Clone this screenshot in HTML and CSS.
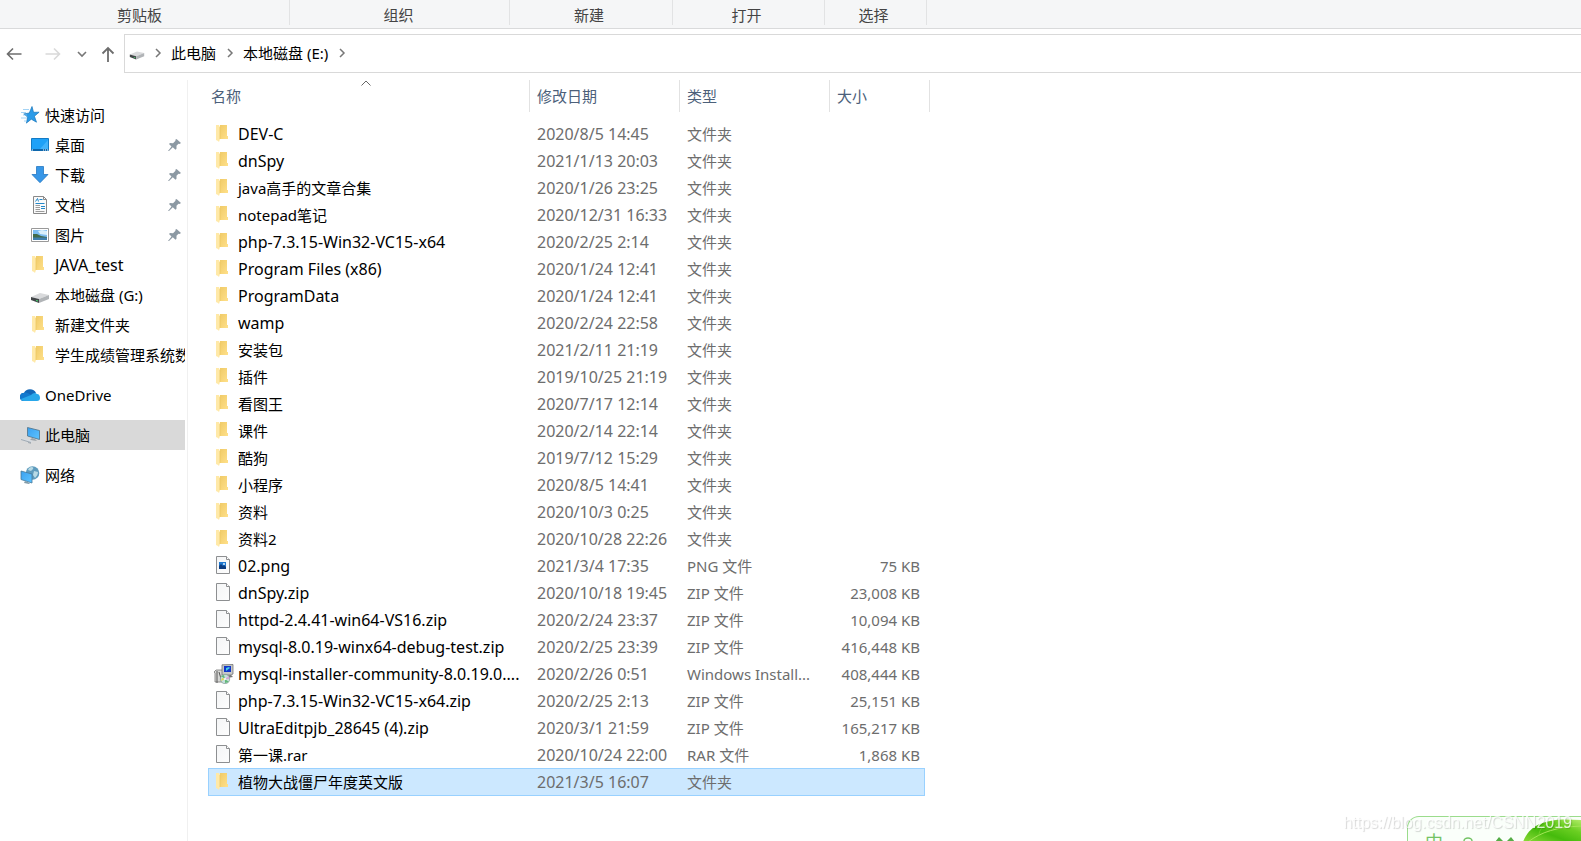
FILE: index.html
```html
<!DOCTYPE html>
<html lang="zh-CN">
<head>
<meta charset="utf-8">
<title>本地磁盘 (E:)</title>
<link rel="stylesheet" href="styles.css">
</head>
<body>
<svg class="defs" aria-hidden="true">
  <defs>
    <linearGradient id="gold" x1="0" y1="0" x2="1" y2="1"><stop offset="0" stop-color="#f0cb68"/><stop offset="1" stop-color="#ffe08a"/></linearGradient>
    <linearGradient id="sky" x1="0" y1="0" x2="1" y2="1"><stop offset="0" stop-color="#3aa0f0"/><stop offset="1" stop-color="#5ec4ff"/></linearGradient>
    <linearGradient id="paper" x1="0" y1="0" x2="1" y2="1"><stop offset="0" stop-color="#f4f5f6"/><stop offset="1" stop-color="#fdfdfd"/></linearGradient>
    <linearGradient id="leaf" x1="0" y1="1" x2="1" y2="0"><stop offset="0" stop-color="#8fdc3a"/><stop offset="0.4" stop-color="#45bb0c"/><stop offset="0.7" stop-color="#6bcf22"/><stop offset="1" stop-color="#b4ec6a"/></linearGradient>
  </defs>
  <symbol id="folder" viewBox="0 0 20 20"><path d="M6 1h7v11h1v3H6z" fill="url(#gold)"/><path d="M2 1h3l1 2v12l-1 3-1-1-2-1z" fill="#ffe9a8"/><path d="M6 3v12" stroke="#edc862" stroke-width=".8"/></symbol>
  <symbol id="file" viewBox="0 0 20 20"><path d="M2.500.500h10l3 3v14h-13z" fill="url(#paper)" stroke="#8d8f91"/><path d="M12.500.500v3h3" fill="#fff" stroke="#8d8f91"/></symbol>
  <symbol id="image-file" viewBox="0 0 20 20"><use href="#file"/><path d="M5 6h7v7H5z" fill="#1e78d0"/><path d="M5 10l2-2 2 2 1-1 2 2v2H5z" fill="#0c3c80"/><circle cx="10" cy="8" r="1" fill="#dff3ff"/></symbol>
  <symbol id="installer" viewBox="0 0 20 20"><path d="M0 8l2-2h7v12H1V9z" fill="#d7d8d6" stroke="#777" stroke-width=".8"/><path d="M3 7v12M5 8l3 10" stroke="#555"/><path d="M8 .8l11-.3v9.500l-2 1H8z" fill="#c6c8c7" stroke="#666" stroke-width=".7"/><path d="M10 2h7v6h-7z" fill="#1237c9"/><path d="M12 4l3-1 1 1-4 3z" fill="#46cde6"/><path d="M9 12l8-1 2 2-6 1z" fill="#777"/><circle cx="11" cy="15" r="4.700" fill="#c7dedb" stroke="#819895" stroke-width=".7"/><path d="M11 15L7 12l3-1zM11 15l4 3-4 1z" fill="#62b979"/><path d="M11 15l4-3v3z" fill="#d4a6d8"/><path d="M11 15l-4 2 1-3z" fill="#e6d34c"/><circle cx="11" cy="15" r="1" fill="#fff"/></symbol>
  <symbol id="star" viewBox="0 0 20 20"><path d="M12 1.500l1.500 5.800 5.600-.1-4.700 4 2.100 6-5.200-3-4.900 3.900 1.300-6-3.900-3.200 5.500-.9z" fill="#2b9be8" stroke="#1775bc" stroke-width=".7"/><path d="M3 4.500h6M1 7.500h5M3 10h4M1 13h6M4 16h3" stroke="#8bc8f3" stroke-width=".8"/></symbol>
  <symbol id="desktop" viewBox="0 0 20 20"><path d="M1.500 3.500h17v12h-17z" fill="#1fa1f7" stroke="#147bc5"/><path d="M10 14L18 5v9z" fill="#42b3fb"/><path d="M2 14h16v2H2z" fill="#0e67ac"/><path d="M2 15h1M13 15h1M15 15h1M17 15h1" stroke="#fff"/></symbol>
  <symbol id="download" viewBox="0 0 20 20"><path d="M6.500 1.500h7v8h4.500L10 17.700 2 9.500h4.500z" fill="#3797e8" stroke="#2677c2" stroke-width=".8"/></symbol>
  <symbol id="document" viewBox="0 0 20 20"><path d="M3.500 1.500h10l3 3v14h-13z" fill="#fafafa" stroke="#898989"/><path d="M13.500 1.500v3h3" fill="none" stroke="#898989"/><path d="M5.500 6.500l2-3 1 3M9.500 4.500h3M5.500 8.500h9M11 11.500h4M11 13.500h4" stroke="#2488c9" fill="none"/><path d="M5.500 10.500H10M5.500 12.500H10M5.500 14.500H10M5.500 16.500h9" stroke="#9b9b9b"/></symbol>
  <symbol id="picture" viewBox="0 0 20 20"><path d="M1.500 3.500h17v13h-17z" fill="#fff" stroke="#999"/><path d="M3 5h14v10H3z" fill="#7dbdf2"/><path d="M8 6l4-1 5 1v4l-7-1z" fill="#d9effb"/><path d="M3 9l4 0 4 2 6 1v2H3z" fill="#426b4b"/><path d="M3 12.500h14V15H3z" fill="#3f7fae"/></symbol>
  <symbol id="drive" viewBox="0 0 20 20"><path d="M1 12l9-4 9 2-10 4z" fill="#d9dadc"/><path d="M1 12l8 2v4l-8-3z" fill="#424648"/><path d="M9 14l10-4v4L9 18z" fill="#b1b4b7"/><path d="M6 15l2 .5v1L6 16z" fill="#46dc72"/></symbol>
  <symbol id="cloud" viewBox="0 0 20 20"><path d="M4 8a6.500 6 0 0 1 12 0l-5 4-6 4H4a4 4 0 0 1 0-8z" fill="#1267b8"/><path d="M3 8c3-1.500 5 0 8 2l-7 6C1 16 0 14 0 12c0-2 1-4 3-4z" fill="#1279ce"/><path d="M11 10c2-2 4-3 6-1 2 0 3 2 3 4s-1 3-3 3H4c-2 0-3-1-3-2z" fill="#28a7ea"/></symbol>
  <symbol id="computer" viewBox="0 0 20 20"><path d="M7.500 2.500l12 3v9L7.500 11z" fill="url(#sky)" stroke="#4f7186" stroke-width=".8"/><path d="M12 13l3 1 2 2-7-1z" fill="#9ca4a9"/><path d="M1 13l12 3-3 2-9-3z" fill="#d6dce2"/><path d="M1 14.500l10 3M8 17.500l3 .8" stroke="#929da6" stroke-width=".8"/></symbol>
  <symbol id="network" viewBox="0 0 20 20"><circle cx="12.500" cy="8" r="6.800" fill="#5e9bbd"/><path d="M9 3c3-2 5-1 4 1l-2 2-3-1zM14 6l4 1c0 3-2 5-3 6l-2-3z" fill="#b8dae5"/><path d="M1 6l11 3v9L1 14.500z" fill="url(#sky)" stroke="#487a99" stroke-width=".8"/><path d="M5 16l5 2-1 1-5-1z" fill="#829ba8"/></symbol>
  <symbol id="pin" viewBox="0 0 14 14"><path d="M8.500 1l4.500 4-1.500 1-1-.2-2 2v3l-1 1-2.700-2.500L1 13H0l3.500-4.500L1 6l1-1 3 .3 2.500-2.500-.2-1z" fill="#8c99a3"/></symbol>
  <symbol id="chevron" viewBox="0 0 10 10"><path d="M3 1l4 4-4 4" fill="none" stroke="#777" stroke-width="1.500"/></symbol>
</svg>

<header class="ribbon">
  <span class="group clipboard">剪贴板</span><span class="group organize">组织</span><span class="group create">新建</span><span class="group open">打开</span><span class="group select">选择</span>
</header>

<nav class="toolbar" aria-label="导航">
  <button class="tool" aria-label="后退"><svg viewBox="0 0 16 16"><path d="M15.500 8H1.500M7 2.500L1.500 8 7 13.500" fill="none" stroke="#6d6d6d" stroke-width="1.600"/></svg></button>
  <button class="tool forward" aria-label="前进"><svg viewBox="0 0 16 16"><path d="M.5 8h14M9 2.500L14.500 8 9 13.500" fill="none" stroke="#d9d9d9" stroke-width="1.600"/></svg></button>
  <button class="tool recent" aria-label="最近位置"><svg viewBox="0 0 10 10"><path d="M1 3l4 4 4-4" fill="none" stroke="#777" stroke-width="1.600"/></svg></button>
  <button class="tool up" aria-label="上移"><svg viewBox="0 0 16 16"><path d="M8 16V2M2.500 7.500L8 2l5.500 5.500" fill="none" stroke="#6d6d6d" stroke-width="1.800"/></svg></button>
  <div class="address">
    <svg class="icon"><use href="#drive"/></svg>
    <svg class="chevron"><use href="#chevron"/></svg>
    <a href="#pc">此电脑</a>
    <svg class="chevron"><use href="#chevron"/></svg>
    <a href="#e">本地磁盘 (E:)</a>
    <svg class="chevron"><use href="#chevron"/></svg>
  </div>
</nav>

<div class="content">
  <aside class="sidebar">
    <a class="place" href="#quick"><svg class="icon"><use href="#star"/></svg><span>快速访问</span></a>
    <a class="place child" href="#desktop-dir"><svg class="icon"><use href="#desktop"/></svg><span>桌面</span><svg class="pin"><use href="#pin"/></svg></a>
    <a class="place child" href="#downloads"><svg class="icon"><use href="#download"/></svg><span>下载</span><svg class="pin"><use href="#pin"/></svg></a>
    <a class="place child" href="#documents"><svg class="icon"><use href="#document"/></svg><span>文档</span><svg class="pin"><use href="#pin"/></svg></a>
    <a class="place child" href="#pictures"><svg class="icon"><use href="#picture"/></svg><span>图片</span><svg class="pin"><use href="#pin"/></svg></a>
    <a class="place child" href="#java"><svg class="icon"><use href="#folder"/></svg><span class="latin">JAVA_test</span></a>
    <a class="place child" href="#g"><svg class="icon"><use href="#drive"/></svg><span>本地磁盘 (G:)</span></a>
    <a class="place child" href="#new"><svg class="icon"><use href="#folder"/></svg><span>新建文件夹</span></a>
    <a class="place child" href="#grades"><svg class="icon"><use href="#folder"/></svg><span>学生成绩管理系统数</span></a>
    <a class="place root" href="#onedrive"><svg class="icon"><use href="#cloud"/></svg><span>OneDrive</span></a>
    <a class="place root current" href="#pc"><svg class="icon"><use href="#computer"/></svg><span>此电脑</span></a>
    <a class="place root" href="#network-dir"><svg class="icon"><use href="#network"/></svg><span>网络</span></a>
  </aside>

  <main class="files">
    <table class="list">
      <colgroup><col class="col-name"><col class="col-date"><col class="col-type"><col class="col-size"><col class="col-end"></colgroup>
      <thead><tr>
        <th><button class="sort first">名称<svg class="caret" viewBox="0 0 10 6"><path d="M.5 5.500L5 1l4.500 4.500" fill="none" stroke="#666"/></svg></button></th>
        <th><button class="sort">修改日期</button></th><th><button class="sort">类型</button></th><th colspan="2"><button class="sort">大小</button></th>
      </tr></thead>
      <tbody>
        <tr><td><div class="name latin"><svg class="icon"><use href="#folder"/></svg>DEV-C</div></td><td class="date">2020/8/5 14:45</td><td>文件夹</td><td></td></tr>
        <tr><td><div class="name latin"><svg class="icon"><use href="#folder"/></svg>dnSpy</div></td><td class="date">2021/1/13 20:03</td><td>文件夹</td><td></td></tr>
        <tr><td><div class="name"><svg class="icon"><use href="#folder"/></svg>java高手的文章合集</div></td><td class="date">2020/1/26 23:25</td><td>文件夹</td><td></td></tr>
        <tr><td><div class="name"><svg class="icon"><use href="#folder"/></svg>notepad笔记</div></td><td class="date">2020/12/31 16:33</td><td>文件夹</td><td></td></tr>
        <tr><td><div class="name latin"><svg class="icon"><use href="#folder"/></svg>php-7.3.15-Win32-VC15-x64</div></td><td class="date">2020/2/25 2:14</td><td>文件夹</td><td></td></tr>
        <tr><td><div class="name latin"><svg class="icon"><use href="#folder"/></svg>Program Files (x86)</div></td><td class="date">2020/1/24 12:41</td><td>文件夹</td><td></td></tr>
        <tr><td><div class="name latin"><svg class="icon"><use href="#folder"/></svg>ProgramData</div></td><td class="date">2020/1/24 12:41</td><td>文件夹</td><td></td></tr>
        <tr><td><div class="name latin"><svg class="icon"><use href="#folder"/></svg>wamp</div></td><td class="date">2020/2/24 22:58</td><td>文件夹</td><td></td></tr>
        <tr><td><div class="name"><svg class="icon"><use href="#folder"/></svg>安装包</div></td><td class="date">2021/2/11 21:19</td><td>文件夹</td><td></td></tr>
        <tr><td><div class="name"><svg class="icon"><use href="#folder"/></svg>插件</div></td><td class="date">2019/10/25 21:19</td><td>文件夹</td><td></td></tr>
        <tr><td><div class="name"><svg class="icon"><use href="#folder"/></svg>看图王</div></td><td class="date">2020/7/17 12:14</td><td>文件夹</td><td></td></tr>
        <tr><td><div class="name"><svg class="icon"><use href="#folder"/></svg>课件</div></td><td class="date">2020/2/14 22:14</td><td>文件夹</td><td></td></tr>
        <tr><td><div class="name"><svg class="icon"><use href="#folder"/></svg>酷狗</div></td><td class="date">2019/7/12 15:29</td><td>文件夹</td><td></td></tr>
        <tr><td><div class="name"><svg class="icon"><use href="#folder"/></svg>小程序</div></td><td class="date">2020/8/5 14:41</td><td>文件夹</td><td></td></tr>
        <tr><td><div class="name"><svg class="icon"><use href="#folder"/></svg>资料</div></td><td class="date">2020/10/3 0:25</td><td>文件夹</td><td></td></tr>
        <tr><td><div class="name"><svg class="icon"><use href="#folder"/></svg>资料2</div></td><td class="date">2020/10/28 22:26</td><td>文件夹</td><td></td></tr>
        <tr><td><div class="name latin"><svg class="icon"><use href="#image-file"/></svg>02.png</div></td><td class="date">2021/3/4 17:35</td><td>PNG 文件</td><td class="size">75 KB</td></tr>
        <tr><td><div class="name latin"><svg class="icon"><use href="#file"/></svg>dnSpy.zip</div></td><td class="date">2020/10/18 19:45</td><td>ZIP 文件</td><td class="size">23,008 KB</td></tr>
        <tr><td><div class="name latin"><svg class="icon"><use href="#file"/></svg>httpd-2.4.41-win64-VS16.zip</div></td><td class="date">2020/2/24 23:37</td><td>ZIP 文件</td><td class="size">10,094 KB</td></tr>
        <tr><td><div class="name latin"><svg class="icon"><use href="#file"/></svg>mysql-8.0.19-winx64-debug-test.zip</div></td><td class="date">2020/2/25 23:39</td><td>ZIP 文件</td><td class="size">416,448 KB</td></tr>
        <tr><td><div class="name latin"><svg class="icon"><use href="#installer"/></svg>mysql-installer-community-8.0.19.0....</div></td><td class="date">2020/2/26 0:51</td><td>Windows Install...</td><td class="size">408,444 KB</td></tr>
        <tr><td><div class="name latin"><svg class="icon"><use href="#file"/></svg>php-7.3.15-Win32-VC15-x64.zip</div></td><td class="date">2020/2/25 2:13</td><td>ZIP 文件</td><td class="size">25,151 KB</td></tr>
        <tr><td><div class="name latin"><svg class="icon"><use href="#file"/></svg>UltraEditpjb_28645 (4).zip</div></td><td class="date">2020/3/1 21:59</td><td>ZIP 文件</td><td class="size">165,217 KB</td></tr>
        <tr><td><div class="name"><svg class="icon"><use href="#file"/></svg>第一课.rar</div></td><td class="date">2020/10/24 22:00</td><td>RAR 文件</td><td class="size">1,868 KB</td></tr>
        <tr class="selected"><td><div class="name"><svg class="icon"><use href="#folder"/></svg>植物大战僵尸年度英文版</div></td><td class="date">2021/3/5 16:07</td><td>文件夹</td><td></td></tr>
      </tbody>
    </table>
  </main>
</div>

<div class="ime">
  <span class="ime-mode">中</span>
  <svg class="ime-art" viewBox="0 0 174 25"><path d="M57 25v-1a4 3 0 0 1 8 0v1" fill="none" stroke="#74c365" stroke-width="1.500"/><path d="M88 25l4-5 4 4h4l4-4 4 5z" fill="#55ad47"/><path d="M116 25C122 8 138 0 174 3v22z" fill="url(#leaf)"/><path d="M121 25C134 15 150 10 174 9" fill="none" stroke="#a3e557" stroke-width="1"/><path d="M132 18c0-5 4-9 9-12M146 12l6-8" fill="none" stroke="#7fd535" stroke-width=".7"/></svg>
</div>
<div class="watermark">https://blog.csdn.net/CSNN2019</div>
</body>
</html>
```
FILE: styles.css
```css
* { box-sizing: border-box; }

body {
  margin: 0;
  min-height: 100vh;
  display: flex;
  flex-direction: column;
  overflow: hidden;
  background: #fff;
  color: #000;
  font: 15px/20px "Noto Sans", "Noto Sans CJK SC", sans-serif;
}

a { color: inherit; text-decoration: none; }
button { font: inherit; color: inherit; background: none; border: 0; padding: 0; }
svg { display: block; flex: none; }
.defs { position: absolute; width: 0; height: 0; }
.icon { width: 20px; height: 20px; }
.latin { font-size: 16px; }

.ribbon {
  display: flex;
  height: 29px;
  padding-bottom: 3px;
  background: #f5f6f7;
  border-bottom: 1px solid #d9dadb;
  color: #444;
}
.group {
  height: 25px;
  padding-top: 5px;
  text-align: center;
  border-right: 1px solid #e2e3e4;
}
.clipboard { width: 290px; padding-right: 10px; }
.organize { width: 220px; padding-right: 2px; }
.create { width: 163px; padding-right: 4px; }
.open { width: 152px; padding-right: 4px; }
.select { width: 102px; padding-right: 4px; }

.toolbar { display: flex; align-items: center; padding-top: 5px; }
.tool { width: 16px; margin-left: 6px; }
.tool svg { width: 100%; height: 16px; }
.forward { margin-left: 23px; }
.recent { width: 10px; margin-left: 16px; }
.up { margin-left: 13px; margin-right: 8px; }
.address {
  flex: 1;
  display: flex;
  align-items: center;
  height: 39px;
  padding-left: 2px;
  padding-bottom: 2px;
  border: 1px solid #d9d9d9;
  border-right: 0;
}
.address a { margin: 0 9px 0 8px; }
.address .chevron { width: 10px; height: 10px; }
.address .icon { height: 16px; }
.address .icon + .chevron { margin-left: 6px; }

.content { flex: 1; display: flex; padding-top: 7px; }
.sidebar {
  width: 188px;
  padding: 20px 2px 0 0;
  border-right: 1px solid #f0f0f0;
}
.place {
  display: flex;
  align-items: center;
  gap: 5px;
  height: 30px;
  padding-left: 20px;
  white-space: nowrap;
  overflow: hidden;
}
.child { padding-left: 30px; }
.root { margin-top: 10px; }
.current { background: #d9d9d9; }
.pin { width: 14px; height: 14px; margin-left: auto; margin-right: 3px; }

.files { padding-left: 20px; }
.list { width: 722px; table-layout: fixed; border-collapse: separate; border-spacing: 0; }
.col-name { width: 322px; }
.col-date, .col-type { width: 150px; }
.col-size { width: 95px; }
.col-end { width: 5px; }

th { padding: 0 0 8px; font-weight: 400; color: #4c607a; }
.sort {
  display: block;
  position: relative;
  width: 100%;
  height: 32px;
  padding-left: 7px;
  text-align: left;
  border-right: 1px solid #e2e2e2;
}
.first { padding-left: 3px; }
.caret { position: absolute; top: 0; left: 153px; width: 10px; height: 6px; }

td {
  height: 27px;
  padding: 0 0 0 7px;
  white-space: nowrap;
  color: #6d6d6d;
}
td:first-child { padding-left: 6px; }
.name { display: flex; align-items: center; gap: 4px; color: #000; }
.date { font-size: 16px; }
.size { padding: 0 5px 0 0; text-align: right; }
.selected td { height: 28px; background: #cce8ff; border: solid #99d1ff; border-width: 1px 0; }
.selected td:first-child { border-left-width: 1px; padding-left: 5px; }
.selected td:last-child { border-right-width: 1px; }

.ime {
  position: fixed;
  right: 0;
  bottom: 0;
  width: 174px;
  height: 25px;
  overflow: hidden;
  border: solid #9bdc8c;
  border-width: 1px 0 0 1px;
  border-radius: 12px 0 0 0;
  background: #fafffa;
}
.ime-mode { position: absolute; left: 17px; top: 15px; font-size: 18px; color: #74c365; }
.ime-art { position: absolute; right: 0; top: 0; width: 174px; height: 25px; }
.watermark {
  position: fixed;
  right: 9px;
  bottom: 8px;
  font: 16px/20px "Liberation Sans", sans-serif;
  color: rgba(255, 255, 255, 0.8);
  text-shadow: 1px 1px 1px rgba(0, 0, 0, 0.16);
}
```
